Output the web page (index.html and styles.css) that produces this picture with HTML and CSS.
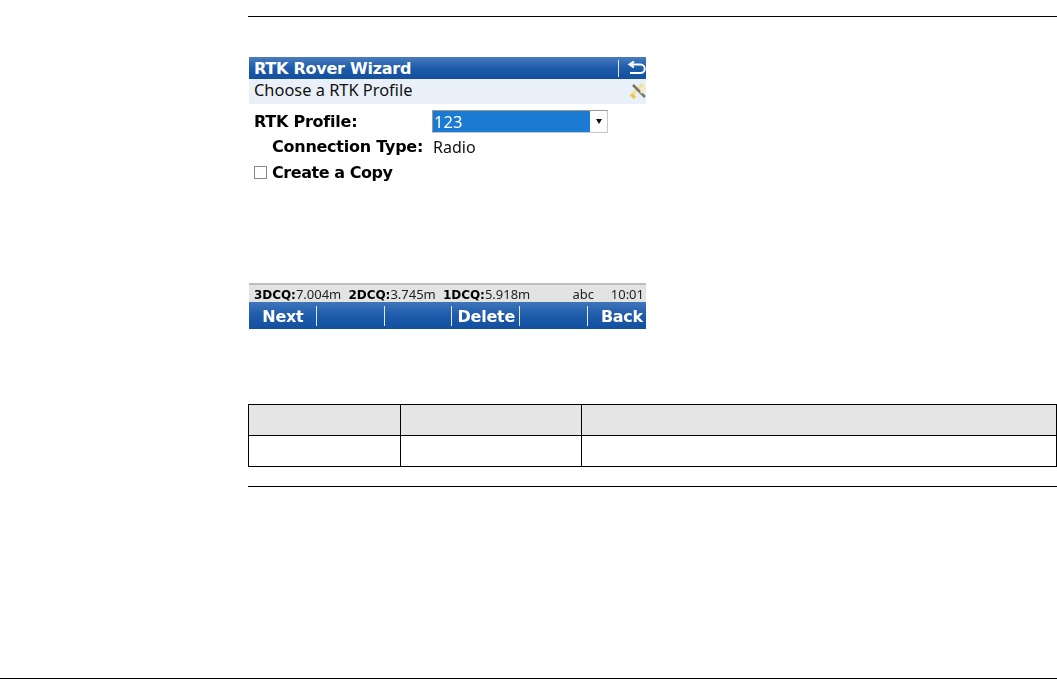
FILE: index.html
```html
<!DOCTYPE html>
<html lang="en">
<head>
<meta charset="utf-8">
<title>RTK Rover Wizard</title>
<link rel="stylesheet" href="styles.css">
</head>
<body>
<div class="page">
  <main class="content">
    <hr class="rule">
    <section class="screen">
      <div class="titlebar">
        <span class="title">RTK Rover Wizard</span>
        <span class="title-sep"></span>
        <svg class="back-icon" viewBox="0 0 18 16" width="18" height="16"><path d="M6 1.500 1.500 4.500 6 7.500M2 4.500h10.500a4 4 0 0 1 0 8.500H2" fill="none" stroke="#fff" stroke-width="2"/></svg>
      </div>
      <div class="subtitle">
        <span>Choose a RTK Profile</span>
        <svg class="tool-icon" viewBox="0 0 16 18" width="16" height="18"><path d="M13 2 3 12" stroke="#efe2a6" stroke-width="3.500"/><path d="M1 12 5 16" stroke="#e8c94e" stroke-width="3.500"/><path d="M3 3 15 15" stroke="#77776a" stroke-width="2.500"/><path d="M11 11 15 5" stroke="#f3e9b8" stroke-width="2.500"/></svg>
      </div>
      <div class="fields">
        <div class="row row-select">
          <span class="label">RTK Profile:</span>
          <div class="select"><span class="select-value">123</span><span class="select-btn"><i class="caret"></i></span></div>
        </div>
        <div class="row row-conn">
          <span class="label label-sub">Connection Type:</span>
          <span class="value">Radio</span>
        </div>
        <div class="row row-check">
          <span class="checkbox"></span>
          <span class="label label-copy">Create a Copy</span>
        </div>
      </div>
      <div class="statusbar">
        <span class="q"><b>3DCQ:</b>7.004m</span>
        <span class="q"><b>2DCQ:</b>3.745m</span>
        <span class="q"><b>1DCQ:</b>5.918m</span>
        <span class="abc">abc</span>
        <span class="time">10:01</span>
      </div>
      <div class="softkeys">
        <span class="key">Next</span>
        <span class="key"></span>
        <span class="key"></span>
        <span class="key">Delete</span>
        <span class="key"></span>
        <span class="key key-last">Back</span>
      </div>
    </section>
    <table class="grid">
      <tr class="head"><td class="c1"></td><td class="c2"></td><td></td></tr>
      <tr><td></td><td></td><td></td></tr>
    </table>
    <hr class="rule rule-after">
  </main>
  <hr class="rule rule-foot">
</div>
</body>
</html>
```
FILE: styles.css
```css
* { box-sizing: border-box; }
html, body { margin: 0; padding: 0; background: #fff; }
body { font-family: "Noto Sans", "DejaVu Sans", sans-serif; color: #000; }
.page { width: 1057px; height: 679px; display: flex; flex-direction: column; overflow: hidden; }
.content { padding: 16px 0 0 248px; }
.rule { margin: 0; border: 0; border-top: 1px solid #000; height: 0; }
.rule-after { margin-top: 19px; }
.rule-foot { margin-top: auto; }
.screen { width: 397px; height: 272px; margin: 40px 0 0 1px; display: flex; flex-direction: column; filter: blur(.3px); }
.titlebar { height: 22px; flex: none; display: flex; align-items: center; padding: 0 0 0 5px; color: #fff; background: linear-gradient(#4a7dbd, #1e5bab 50%, #134f9e); }
.title { font: bold 16px "DejaVu Sans", sans-serif; letter-spacing: -.25px; flex: 1; }
.title-sep { width: 1px; height: 17px; background: #dfe8f4; margin-right: 9px; }
.subtitle { height: 25px; flex: none; display: flex; align-items: center; justify-content: space-between; padding: 0 0 4px 5px; background: #e9f0f8; font-size: 16.400px; color: #111; }
.tool-icon { margin-bottom: -3px; }
.fields { flex: 1; padding: 6px 0 0 5px; }
.row { display: flex; align-items: center; height: 25px; }
.row-select { height: 23px; margin-bottom: 1px; }
.row-check { height: 27px; }
.label { font: bold 16px "DejaVu Sans", sans-serif; letter-spacing: -.25px; }
.label-copy { letter-spacing: -.45px; }
.row-select .label { width: 178px; }
.label-sub { margin-left: 18px; width: 161px; }
.value { font-size: 16px; color: #111; }
.select { width: 176px; height: 23px; display: flex; border: 1px solid #9a9a9a; border-right-color: #c8c8c8; border-bottom-color: #c8c8c8; }
.select-value { flex: 1; background: #1b7ad2; color: #fff; font-size: 16.500px; line-height: 21px; padding-left: 1px; }
.select-btn { width: 17px; display: flex; align-items: center; justify-content: center; background: #fff; }
.caret { width: 0; height: 0; border: 3px solid transparent; border-top: 5px solid #111; border-bottom: 0; }
.checkbox { width: 13px; height: 13px; border: 1px solid #8a8a8a; margin-right: 5px; background: #fff; }
.statusbar { height: 19px; flex: none; display: flex; align-items: center; padding: 0 2px 0 5px; background: #e3e3e3; border-top: 2px solid #bdbdbd; font-size: 13px; color: #222; white-space: nowrap; }
.q { flex: none; width: 94.500px; }
.q b { font: bold 12px "DejaVu Sans", sans-serif; letter-spacing: -.05px; color: #000; }
.abc { margin-left: 35px; }
.time { margin-left: auto; }
.softkeys { height: 27px; flex: none; display: grid; grid-template-columns: repeat(5, 67.800px) 1fr; background: linear-gradient(#3f75ba, #1e5bab 50%, #134f9e); }
.key { color: #fff; font: bold 16px "DejaVu Sans", sans-serif; letter-spacing: -.25px; text-align: center; line-height: 30px; position: relative; }
.key:not(.key-last)::after { content: ""; position: absolute; right: 0; top: 4px; height: 20px; width: 1px; background: #dfe8f4; }
.key-last { text-align: right; padding-right: 3px; }
.grid { width: 809px; margin-top: 75px; border-collapse: collapse; table-layout: fixed; }
.grid td { border: 1px solid #000; height: 31px; padding: 0; }
.grid .c1 { width: 152px; }
.grid .c2 { width: 181px; }
.head td { background: #e5e5e5; }
```
